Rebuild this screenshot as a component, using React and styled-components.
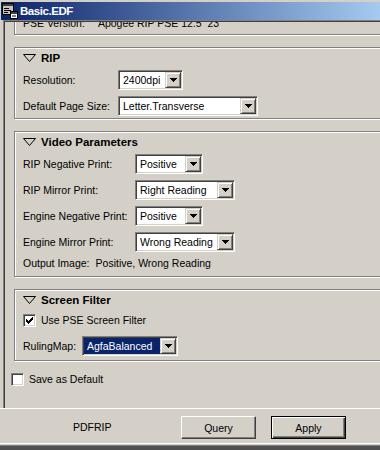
import React from 'react';
import styled, { createGlobalStyle, css } from 'styled-components';

const Global = createGlobalStyle`
  html, body { margin: 0; padding: 0; background: #d4d0c8; overflow: hidden; }
  body { font-family: "Liberation Sans", Arial, sans-serif; }
`;

const Window = styled.div`
  width: 460px;
  height: 450px;
  overflow: hidden;
  background: #d4d0c8;
  display: flex;
  flex-direction: column;
  font-family: "Liberation Sans", Arial, sans-serif;
  font-size: 10.5px;
  color: #000;
`;

const TitleBar = styled.div`
  flex: none;
  margin: 2px 0 0 1px;
  height: 18px;
  padding-left: 1px;
  display: flex;
  align-items: center;
  gap: 2px;
  background: linear-gradient(to right, #0a246a 0px, #a6caf0 380px);
  color: #fff;
  font-weight: bold;
  font-size: 11.5px;
  letter-spacing: -0.45px;
`;

const ScrollPane = styled.div`
  flex: none;
  height: 388px;
  box-sizing: border-box;
  margin-left: 3px;
  border-top: 1px solid #808080;
  border-left: 1px solid #808080;
`;

const Viewport = styled.div`
  height: 100%;
  box-sizing: border-box;
  border-top: 1px solid #404040;
  border-left: 1px solid #404040;
  overflow: hidden;
`;

const Rule = styled.div`
  flex: none;
  height: 1px;
  background: #ffffff;
`;

const Panel = styled.section`
  margin: ${p => p.$mt}px 0 0 9px;
  border: 1px solid #808080;
  box-shadow: inset 1px 1px 0 #ffffff, 1px 1px 0 #ffffff;
  padding: 1px 8px 2px;
  display: flex;
  flex-direction: column;
`;

const Header = styled.div`
  height: 18px;
  display: flex;
  align-items: center;
  gap: 5px;
  font-weight: bold;
  font-size: 11.5px;
`;

const FieldRow = styled.div`
  display: flex;
  align-items: center;
  height: 20px;
  margin-top: ${p => p.$mt}px;
  margin-bottom: ${p => p.$mb || 0}px;
`;

const Label = styled.span`
  flex: none;
  width: ${p => p.$w}px;
  white-space: nowrap;
`;

const InfoRow = styled.div`
  display: flex;
  align-items: center;
  height: 16px;
  margin-top: 3px;
  margin-bottom: ${p => p.$mb}px;
  white-space: pre;
`;

const InfoValue = styled.span`
  margin-left: ${p => p.$gap}px;
`;

const Combo = styled.div`
  flex: none;
  width: ${p => p.$w}px;
  height: 20px;
  box-sizing: border-box;
  display: flex;
  padding: 1px;
  background: #ffffff;
  border: 1px solid;
  border-color: #808080 #ffffff #ffffff #808080;
  box-shadow: inset 1px 1px 0 #404040, inset -1px -1px 0 #d4d0c8;
`;

const ComboField = styled.div`
  flex: 1;
  height: 16px;
  line-height: 16px;
  padding-left: 3px;
  white-space: nowrap;
  overflow: hidden;
  ${p => p.$selected ? css`
    background: #0a246a;
    color: #ffffff;
  ` : css`
    background: #ffffff;
    color: #000000;
  `}
`;

const DropButton = styled.div`
  flex: none;
  width: 16px;
  height: 16px;
  box-sizing: border-box;
  background: #d4d0c8;
  border: 1px solid;
  border-color: #d4d0c8 #404040 #404040 #d4d0c8;
  box-shadow: inset 1px 1px 0 #ffffff, inset -1px -1px 0 #808080;
  display: flex;
  align-items: center;
  justify-content: center;
`;

const CheckRow = styled.div`
  display: flex;
  align-items: center;
  gap: 5px;
  height: 16px;
  margin: ${p => p.$mt}px 0 0 ${p => p.$ml || 0}px;
`;

const CheckBox = styled.span`
  flex: none;
  width: 13px;
  height: 13px;
  box-sizing: border-box;
  background: #ffffff;
  border: 1px solid;
  border-color: #808080 #ffffff #ffffff #808080;
  box-shadow: inset 1px 1px 0 #404040, inset -1px -1px 0 #d4d0c8;
  display: flex;
  align-items: center;
  justify-content: center;
`;

const Footer = styled.div`
  flex: none;
  height: 34px;
  box-sizing: border-box;
  padding: 7px 0 4px 73px;
  display: flex;
  align-items: flex-start;
`;

const FooterLabel = styled.span`
  flex: none;
  width: 108px;
  line-height: 23px;
`;

const Button = styled.button`
  flex: none;
  width: 75px;
  height: 23px;
  box-sizing: border-box;
  margin: 0 15px 0 0;
  padding: 0;
  font-family: "Liberation Sans", Arial, sans-serif;
  font-size: 10.5px;
  color: #000;
  background: #d4d0c8;
  border: 1px solid;
  ${p => p.$default ? css`
    border-color: #000000;
    box-shadow: inset 1px 1px 0 #ffffff, inset -1px -1px 0 #404040, inset -2px -2px 0 #808080;
  ` : css`
    border-color: #ffffff #404040 #404040 #ffffff;
    box-shadow: inset -1px -1px 0 #808080;
  `}
`;

const BottomEdge = styled.div`
  flex: none;
  height: 7px;
  border-top: 1px solid #ffffff;
  background: linear-gradient(#d4d0c8 0 1px, #808080 1px 2px, #505050 2px);
`;

const DownTriangle = () => (
  <svg width="13" height="8" viewBox="0 0 13 8">
    <polygon points="0.5,0.5 12.5,0.5 6.5,7.5" fill="none" stroke="#000" strokeWidth="1" />
  </svg>
);

const Arrow = () => (
  <svg width="7" height="4" viewBox="0 0 7 4" shapeRendering="crispEdges">
    <polygon points="0,0 7,0 3.5,4" fill="#000" />
  </svg>
);

const Tick = () => (
  <svg width="7" height="7" viewBox="0 0 7 7" shapeRendering="crispEdges">
    <polygon points="0,2 2,4 7,-1 7,2 2,7 0,5" fill="#000" />
  </svg>
);

const AppIcon = () => (
  <svg width="16" height="16" viewBox="0 0 16 16" shapeRendering="crispEdges">
    <rect x="0.5" y="0.5" width="11" height="11" fill="#c8c4bc" stroke="#000" />
    <rect x="1" y="1" width="10" height="2" fill="#404040" />
    <rect x="2" y="5" width="5" height="1" fill="#000" />
    <rect x="2" y="7" width="7" height="1" fill="#000" />
    <rect x="2" y="9" width="4" height="1" fill="#000" />
    <rect x="8.5" y="8.5" width="7" height="7" fill="#ffffff" stroke="#000" />
    <rect x="9" y="9" width="6" height="2" fill="#404040" />
    <rect x="10" y="12" width="4" height="2" fill="#808080" />
  </svg>
);

const ComboBox = ({ w, value, selected }) => (
  <Combo $w={w}>
    <ComboField $selected={selected}>{value}</ComboField>
    <DropButton><Arrow /></DropButton>
  </Combo>
);

const Section = ({ title, mt, children }) => (
  <Panel $mt={mt}>
    <Header>
      <DownTriangle />
      <span>{title}</span>
    </Header>
    {children}
  </Panel>
);

const videoRows = [
  { label: 'RIP Negative Print:', value: 'Positive', w: 68 },
  { label: 'RIP Mirror Print:', value: 'Right Reading', w: 100 },
  { label: 'Engine Negative Print:', value: 'Positive', w: 68 },
  { label: 'Engine Mirror Print:', value: 'Wrong Reading', w: 100 },
];

export default function App() {
  return (
    <>
      <Global />
      <Window>
        <TitleBar>
          <AppIcon />
          <span>Basic.EDF</span>
        </TitleBar>
        <ScrollPane>
          <Viewport>
            <Panel $mt={-12}>
              <InfoRow $mb={1}>
                <span>PSE Version:</span>
                <InfoValue $gap={13}>Apogee RIP PSE 12.5  23</InfoValue>
              </InfoRow>
            </Panel>

            <Section title="RIP" mt={12}>
              <FieldRow $mt={3}>
                <Label $w={95}>Resolution:</Label>
                <ComboBox w={65} value="2400dpi" />
              </FieldRow>
              <FieldRow $mt={6}>
                <Label $w={95}>Default Page Size:</Label>
                <ComboBox w={140} value="Letter.Transverse" />
              </FieldRow>
            </Section>

            <Section title="Video Parameters" mt={12}>
              {videoRows.map((r, i) => (
                <FieldRow key={r.label} $mt={i === 0 ? 3 : 6}>
                  <Label $w={112}>{r.label}</Label>
                  <ComboBox w={r.w} value={r.value} />
                </FieldRow>
              ))}
              <InfoRow $mb={3}>
                <span>Output Image:</span>
                <InfoValue $gap={6}>Positive, Wrong Reading</InfoValue>
              </InfoRow>
            </Section>

            <Section title="Screen Filter" mt={12}>
              <CheckRow $mt={3}>
                <CheckBox><Tick /></CheckBox>
                <span>Use PSE Screen Filter</span>
              </CheckRow>
              <FieldRow $mt={8} $mb={2}>
                <Label $w={59}>RulingMap:</Label>
                <ComboBox w={96} value="AgfaBalanced" selected />
              </FieldRow>
            </Section>

            <CheckRow $mt={10} $ml={6}>
              <CheckBox />
              <span>Save as Default</span>
            </CheckRow>
          </Viewport>
        </ScrollPane>
        <Rule />
        <Footer>
          <FooterLabel>PDFRIP</FooterLabel>
          <Button type="button">Query</Button>
          <Button type="button" $default>Apply</Button>
        </Footer>
        <BottomEdge />
      </Window>
    </>
  );
}
